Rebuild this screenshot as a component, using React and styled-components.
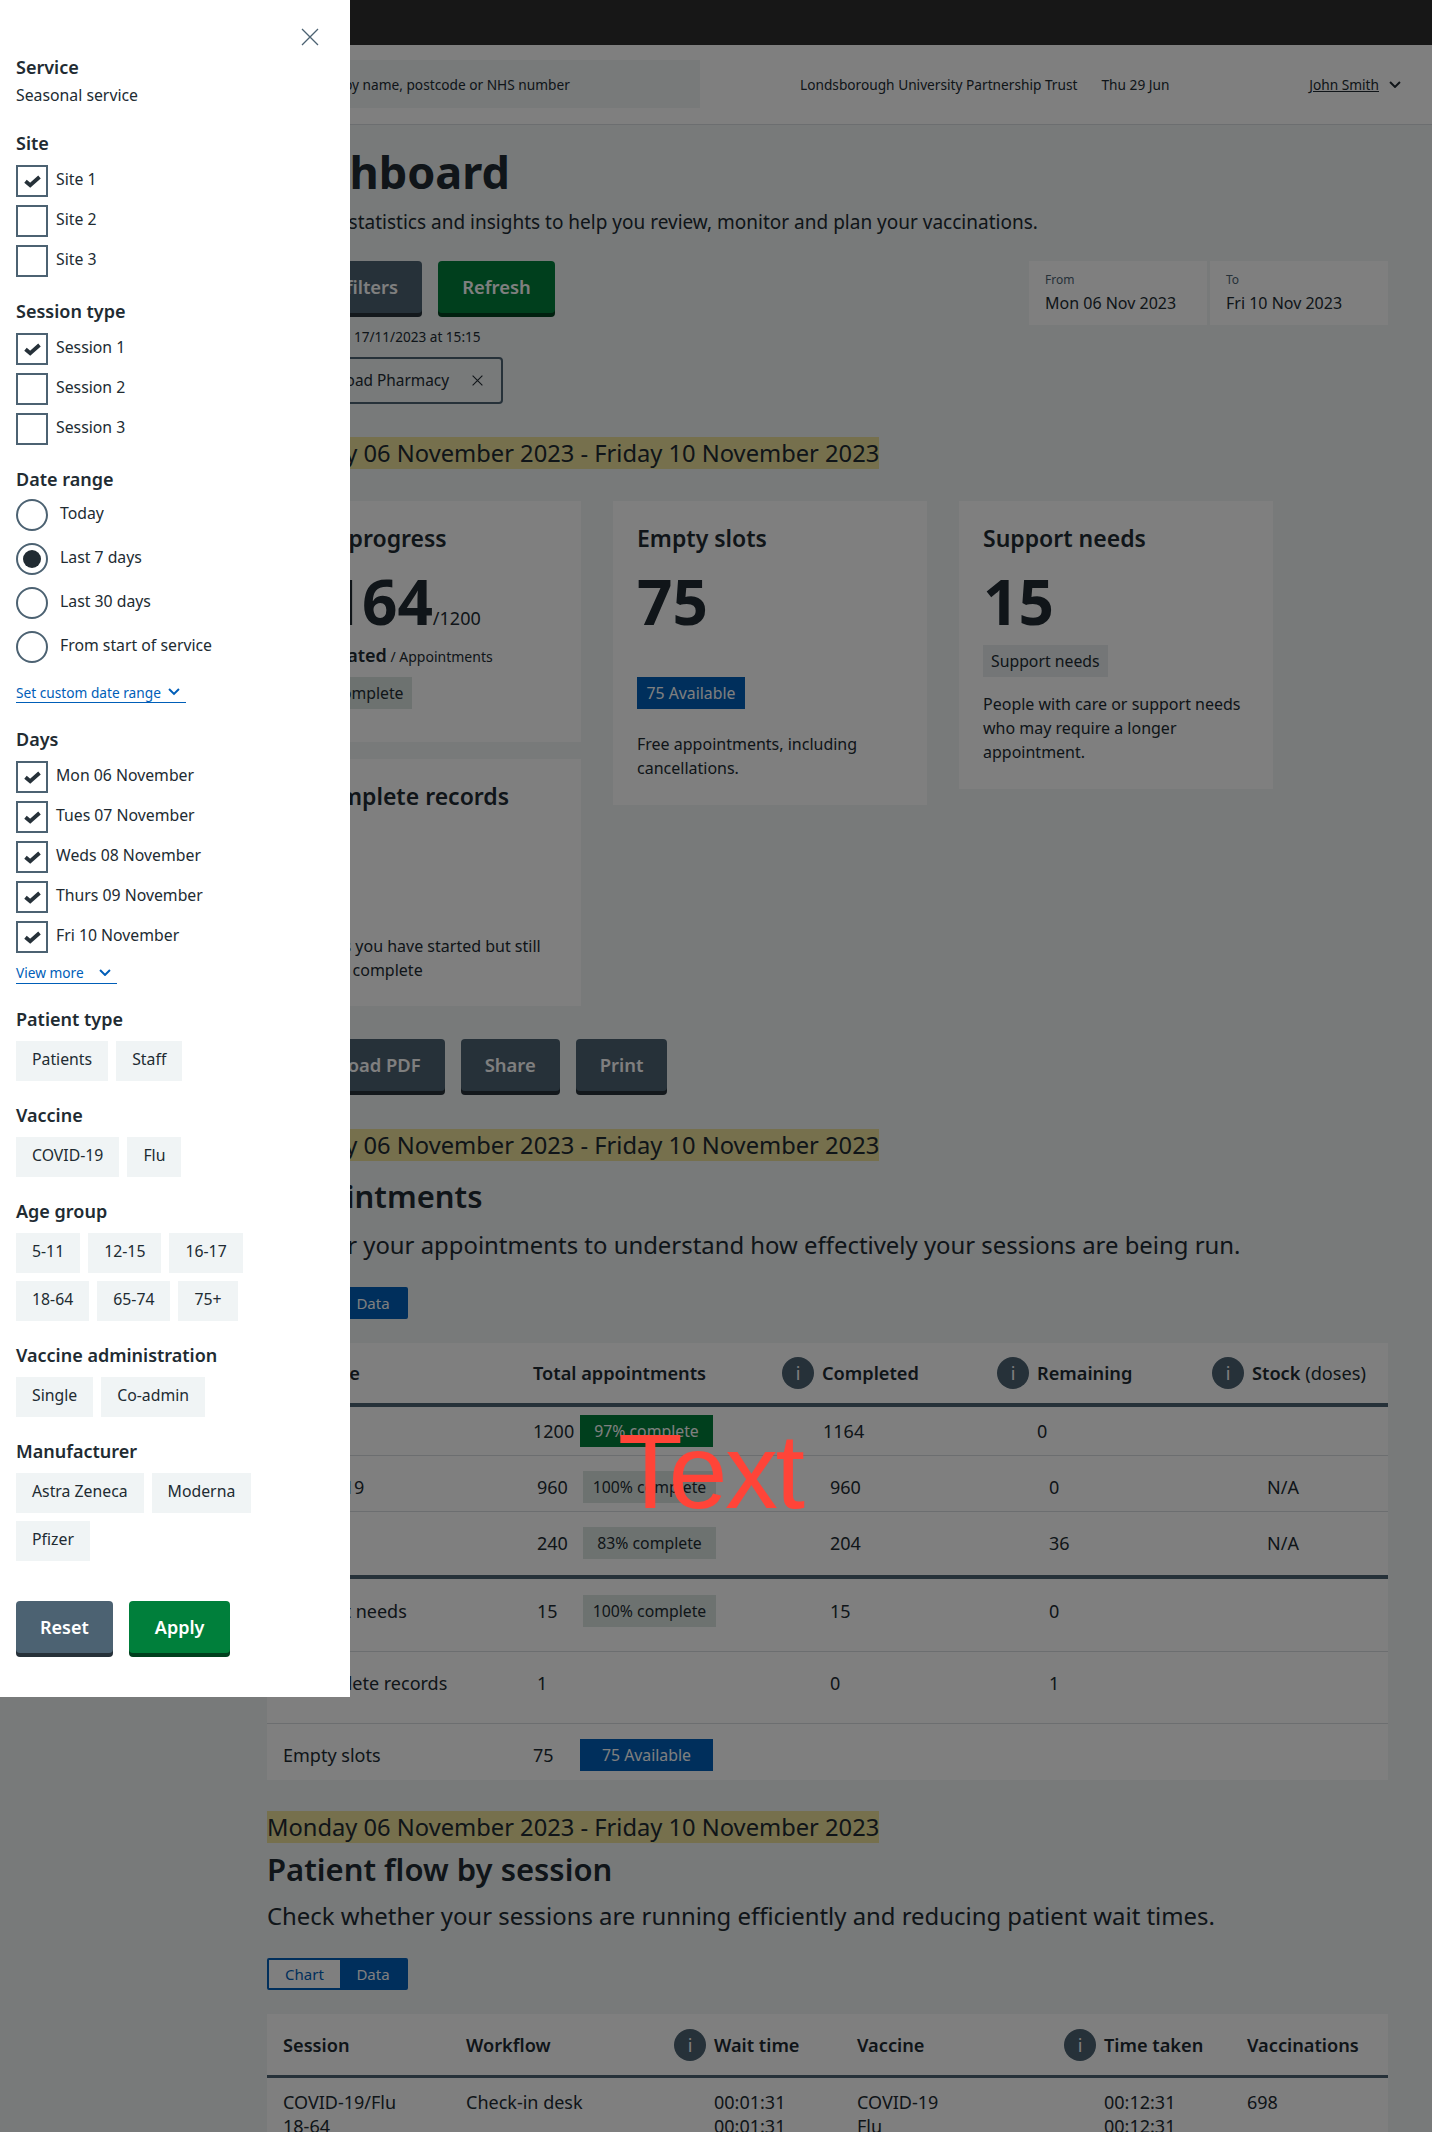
import React from "react";
import styled, { createGlobalStyle } from "styled-components";

const Global = createGlobalStyle`
  html, body { margin: 0; padding: 0; height: 2132px; overflow: hidden; background: #f0f4f5; }
  body { font-family: "Noto Sans", "Open Sans", sans-serif; color: #212b32; font-size: 16px; }
  * { box-sizing: border-box; }
`;

const Frame = styled.div`position: relative; width: 1432px; height: 2132px; overflow: hidden;`;
const TopBar = styled.div`height: 45px; background: #2e2e2e;`;
const Header = styled.header`
  height: 80px; background: #fff; border-bottom: 1px solid #d8dde0;
  display: flex; align-items: center; padding: 0 31px 0 283px; font-size: 13.7px;
`;
const Search = styled.div`
  width: 417px; height: 48px; margin-top: -1px; background: #f0f4f5; display: flex; align-items: center; padding-left: 14px;
`;
const Trust = styled.span`margin-left: 100px;`;
const HeaderDate = styled.span`margin-left: 24px;`;
const User = styled.span`margin-left: auto; display: flex; align-items: center; gap: 10px;`;
const UserName = styled.span`text-decoration: underline;`;

const Main = styled.main`padding: 19px 44px 0 267px;`;
const H1 = styled.h1`margin: 0; font-size: 45px; line-height: 56px; font-weight: 700;`;
const Lead = styled.p`margin: 8px 0 0; font-size: 19px; line-height: 28px;`;
const Toolbar = styled.div`display: flex; justify-content: space-between; align-items: flex-start; margin-top: 25px;`;
const ButtonRow = styled.div`display: flex; gap: ${p => p.$gap || 16}px; margin-top: ${p => p.$top || 0}px;`;
const Button = styled.button`
  height: 52px; margin-bottom: 4px; padding: 0 ${p => p.$pad || 24}px; border: 0; border-radius: 4px;
  font: 600 ${p => p.$size || 18.4}px/1 "Noto Sans", sans-serif; color: #fff;
  background: ${p => p.$green ? "#007f3b" : "#4c6272"};
  box-shadow: 0 4px 0 ${p => p.$green ? "#00401e" : "#263139"};
`;
const Updated = styled.div`font-size: 13.6px; line-height: 20px; margin-top: 10px;`;
const Tagged = styled.div`
  display: inline-flex; align-items: center; gap: 23px; height: 47px; margin-top: 10px; padding: 0 18px 0 12px;
  border: 2px solid #4c6272; border-radius: 4px; font-size: 15.4px;
`;
const DateBoxes = styled.div`display: flex; gap: 3px;`;
const DateBox = styled.div`width: 178px; height: 64px; background: #fff; padding: 12px 16px;`;
const DateLabel = styled.div`font-size: 12px; line-height: 14px; color: #4c6272;`;
const DateValue = styled.div`font-size: 16px; line-height: 22px; margin-top: 5px;`;
const Highlight = styled.div`margin-top: ${p => p.$top}px; height: 32px;`;
const Mark = styled.span`
  display: inline-block; height: 32px; white-space: nowrap; background: #ece09a; font-size: 23.7px; line-height: 32px;
`;
const Cards = styled.div`display: grid; grid-template-columns: repeat(3, 314px); column-gap: 32px; width: 1006px; margin-top: 32px; align-items: start;`;
const Stack = styled.div`display: flex; flex-direction: column; gap: 17px;`;
const Card = styled.section`background: #fff; padding: 23px 24px ${p => p.$bottom || 24}px;`;
const CardTitle = styled.h3`margin: 0; font-size: 23px; line-height: 28px; font-weight: 600;`;
const BigNumber = styled.div`margin-top: 13px; font-size: 62px; line-height: 72px; height: 72px; font-weight: 700;`;
const OutOf = styled.span`font-size: 18px; line-height: 1; font-weight: 400;`;
const Meta = styled.div`margin-top: 8px; line-height: 24px; font-size: 14px; height: 24px;`;
const MetaStrong = styled.strong`font-size: 18px; line-height: 1; font-weight: 600;`;
const Tag = styled.span`
  display: flex; align-items: center; justify-content: center; height: 32px; padding: 0 ${p => p.$pad || 8}px;
  white-space: nowrap; font-size: 15.8px; width: ${p => p.$w ? p.$w + "px" : "fit-content"};
  margin-top: ${p => p.$top || 0}px;
  background: ${p => ({ green: "#007f3b", blue: "#005eb8", mint: "#dbe5e0", grey: "#e8edee" }[p.$kind])};
  color: ${p => (p.$kind === "green" || p.$kind === "blue") ? "#fff" : "#212b32"};
`;
const CardText = styled.p`margin: ${p => p.$top}px 0 0; font-size: 16px; line-height: 24px;`;
const H2 = styled.h2`margin: ${p => p.$top}px 0 0; font-size: 31px; line-height: 40px; font-weight: 600;`;
const Sub = styled.p`margin: ${p => p.$top}px 0 0; font-size: 23.9px; line-height: 32px; white-space: nowrap;`;
const Toggle = styled.div`
  display: flex; width: 141px; height: 32px; margin-top: ${p => p.$top}px; border: 2px solid #005eb8; border-radius: 2px; background: #005eb8; font-size: 15px;
`;
const ToggleItem = styled.span`
  flex: ${p => p.$on ? "0 0 71px" : "1"}; display: flex; align-items: center; justify-content: center;
  background: ${p => p.$on ? "#fff" : "#005eb8"}; color: ${p => p.$on ? "#005eb8" : "#fff"};
`;
const Table = styled.div`margin-top: ${p => p.$top}px; background: #fff; font-size: 18px;`;
const THead = styled.div`
  display: grid; grid-template-columns: ${p => p.$cols}; height: ${p => p.$h}px; align-items: center; padding-left: 16px;
  border-bottom: ${p => p.$line}px solid #4c6272; font-weight: 600; font-size: 18.2px;
`;
const HeadCell = styled.div`display: flex; align-items: center; gap: 8px; white-space: nowrap;`;
const Light = styled.span`font-weight: 400;`;
const Info = styled.span`
  flex: 0 0 32px; width: 32px; height: 32px; border-radius: 50%; background: #4c6272; color: #fff;
  display: flex; align-items: center; justify-content: center; font-size: 18px; font-weight: 400;
`;
const TRow = styled.div`
  display: grid; grid-template-columns: ${p => p.$cols}; height: ${p => p.$h}px; padding: ${p => p.$pt}px 0 0 16px;
  border-bottom: ${p => p.$line ?? 1}px solid ${p => p.$line === 4 ? "#4c6272" : "#d8dde0"}; align-items: start;
`;
const TCell = styled.div`line-height: 32px; white-space: nowrap;`;
const FlowRow = styled.div`
  display: grid; grid-template-columns: 183px 248px 143px 247px 143px 1fr; padding: 12px 0 0 16px; line-height: 24px;
`;
const FlowCell = styled.div`white-space: pre-line;`;

const Overlay = styled.div`position: absolute; inset: 0; background: rgba(0,0,0,.5);`;
const RedText = styled.div`
  position: absolute; left: 618px; top: 1411px; font: 400 106px/120px "Liberation Sans", sans-serif; letter-spacing: -2.5px; color: #ff4438;
`;
const Panel = styled.aside`
  position: absolute; left: 0; top: 0; width: 350px; background: #fff; padding: 28px 16px 40px; font-size: 15.8px;
`;
const Close = styled.button`display: block; width: 18px; height: 18px; margin: 0 15px 9px auto; padding: 0; border: 0; background: none; color: #4c6272;`;
const Group = styled.div`margin-top: ${p => p.$top ?? 22}px;`;
const GroupTitle = styled.div`font-size: 18px; line-height: 24px; font-weight: 600; margin-bottom: ${p => p.$gap ?? 10}px;`;
const Plain = styled.div`line-height: 20px; margin-top: 6px;`;
const Options = styled.div`display: flex; flex-direction: column; gap: ${p => p.$gap}px;`;
const Option = styled.label`display: flex; align-items: center; gap: ${p => p.$gap}px; height: 32px;`;
const OptionText = styled.span`margin-top: -4px;`;
const Box = styled.span`
  flex: 0 0 32px; width: 32px; height: 32px; border: 2px solid #4c6272; display: flex; align-items: center; justify-content: center;
`;
const Radio = styled.span`
  flex: 0 0 32px; width: 32px; height: 32px; border: 2px solid #4c6272; border-radius: 50%; display: flex; align-items: center; justify-content: center;
  &::after { content: ""; width: 18px; height: 18px; border-radius: 50%; background: ${p => p.$on ? "#212b32" : "transparent"}; }
`;
const More = styled.a`
  display: inline-flex; align-items: center; gap: ${p => p.$gap}px; margin-top: ${p => p.$top}px; height: 20px; padding-right: 6px;
  color: #005eb8; font-size: 13.7px; border-bottom: 1.5px solid #005eb8; box-sizing: content-box;
`;
const Chips = styled.div`display: flex; flex-wrap: wrap; gap: 8px; width: 300px;`;
const Chip = styled.span`height: 40px; padding: 8px 16px 0; background: #f0f4f5; line-height: 20px;`;
const PanelActions = styled.div`display: flex; gap: 16px; margin-top: 40px;`;

const Check = () => (
  <svg width="17" height="13" viewBox="0 0 17 13" aria-hidden="true">
    <path d="M1.5 6.2 L6.2 10.2 L15.5 2" fill="none" stroke="#263139" strokeWidth="3.8" />
  </svg>
);
const Chevron = ({ size = 12, color = "#005eb8", w = 2 }) => (
  <svg width={size} height={size * 0.62} viewBox="0 0 12 7.5" aria-hidden="true">
    <path d="M1 1 L6 6 L11 1" fill="none" stroke={color} strokeWidth={w} />
  </svg>
);
const Cross = ({ size = 18, w = 1.3, color = "#4c6272" }) => (
  <svg width={size} height={size} viewBox="0 0 18 18" aria-hidden="true">
    <path d="M1 1 L17 17 M17 1 L1 17" stroke={color} strokeWidth={w} fill="none" />
  </svg>
);

const CheckGroup = ({ title, items, checked, top }) => (
  <Group $top={top}>
    <GroupTitle>{title}</GroupTitle>
    <Options $gap={8}>
      {items.map((t, i) => (
        <Option key={t} $gap={8}>
          <Box>{checked(i) && <Check />}</Box>
          <OptionText>{t}</OptionText>
        </Option>
      ))}
    </Options>
  </Group>
);
const ChipGroup = ({ title, items, top }) => (
  <Group $top={top}>
    <GroupTitle>{title}</GroupTitle>
    <Chips>{items.map(t => <Chip key={t}>{t}</Chip>)}</Chips>
  </Group>
);

const C1 = "250px 47px 243px 214px 1fr";
const C2 = "254px 46px 247px 219px 218px 1fr";
const rows = [
  { c: C1, h: 49, pt: 8, cells: ["Total", "1200", <Tag $kind="green" $w={133}>97% complete</Tag>, "1164", "0"] },
  { c: C2, h: 56, pt: 15, cells: ["COVID-19", "960", <Tag $kind="mint" $w={133}>100% complete</Tag>, "960", "0", "N/A"] },
  { c: C2, h: 67, pt: 15, line: 4, cells: ["Flu", "240", <Tag $kind="mint" $w={133}>83% complete</Tag>, "204", "36", "N/A"] },
  { c: C2, h: 73, pt: 16, cells: ["Support needs", "15", <Tag $kind="mint" $w={133}>100% complete</Tag>, "15", "0"] },
  { c: C2, h: 72, pt: 15, cells: ["Incomplete records", "1", "", "0", "1"] },
  { c: C1, h: 56, pt: 15, line: 0, cells: ["Empty slots", "75", <Tag $kind="blue" $w={133}>75 Available</Tag>] },
];
const Range = "Monday 06 November 2023 - Friday 10 November 2023";

export default function App() {
  return (
    <Frame>
      <Global />
      <TopBar />
      <Header>
        <Search>Search by name, postcode or NHS number</Search>
        <Trust>Londsborough University Partnership Trust</Trust>
        <HeaderDate>Thu 29 Jun</HeaderDate>
        <User><UserName>John Smith</UserName><Chevron color="#212b32" /></User>
      </Header>
      <Main>
        <H1>Dashboard</H1>
        <Lead>View key statistics and insights to help you review, monitor and plan your vaccinations.</Lead>
        <Toolbar>
          <div>
            <ButtonRow>
              <Button>Reset filters</Button>
              <Button $green>Refresh</Button>
            </ButtonRow>
            <Updated>Last updated 17/11/2023 at 15:15</Updated>
            <Tagged>Station Road Pharmacy<Cross size={11} w={1.8} color="#212b32" /></Tagged>
          </div>
          <DateBoxes>
            <DateBox><DateLabel>From</DateLabel><DateValue>Mon 06 Nov 2023</DateValue></DateBox>
            <DateBox><DateLabel>To</DateLabel><DateValue>Fri 10 Nov 2023</DateValue></DateBox>
          </DateBoxes>
        </Toolbar>
        <Highlight $top={33}><Mark>{Range}</Mark></Highlight>
        <Cards>
          <Stack>
            <Card $bottom={33}>
              <CardTitle>Your progress</CardTitle>
              <BigNumber>1164<OutOf>/1200</OutOf></BigNumber>
              <Meta><MetaStrong>Vaccinated</MetaStrong> / Appointments</Meta>
              <Tag $kind="mint" $top={8}>97% complete</Tag>
            </Card>
            <Card>
              <CardTitle>Incomplete records</CardTitle>
              <BigNumber>1</BigNumber>
              <CardText $top={39}>Records you have started but still need to complete</CardText>
            </Card>
          </Stack>
          <Card $bottom={25}>
            <CardTitle>Empty slots</CardTitle>
            <BigNumber>75</BigNumber>
            <Meta />
            <Tag $kind="blue" $top={8} $w={108}>75 Available</Tag>
            <CardText $top={23}>Free appointments, including cancellations.</CardText>
          </Card>
          <Card $bottom={25}>
            <CardTitle>Support needs</CardTitle>
            <BigNumber>15</BigNumber>
            <Tag $kind="grey" $top={8}>Support needs</Tag>
            <CardText $top={15}>People with care or support needs who may require a longer appointment.</CardText>
          </Card>
        </Cards>
        <ButtonRow $top={33}>
          <Button>Download PDF</Button>
          <Button>Share</Button>
          <Button>Print</Button>
        </ButtonRow>
        <Highlight $top={34}><Mark>{Range}</Mark></Highlight>
        <H2 $top={15}>Appointments</H2>
        <Sub $top={13}>Monitor your appointments to understand how effectively your sessions are being run.</Sub>
        <Toggle $top={26}><ToggleItem $on>Chart</ToggleItem><ToggleItem>Data</ToggleItem></Toggle>
        <Table $top={24}>
          <THead $cols="250px 249px 215px 215px 1fr" $h={64} $line={4}>
            <HeadCell>Measure</HeadCell>
            <HeadCell>Total appointments</HeadCell>
            <HeadCell><Info>i</Info>Completed</HeadCell>
            <HeadCell><Info>i</Info>Remaining</HeadCell>
            <HeadCell><Info>i</Info><span>Stock <Light>(doses)</Light></span></HeadCell>
          </THead>
          {rows.map((r, i) => (
            <TRow key={i} $cols={r.c} $h={r.h} $pt={r.pt} $line={r.line}>
              {r.cells.map((c, j) => <TCell key={j}>{c}</TCell>)}
            </TRow>
          ))}
        </Table>
        <Highlight $top={31}><Mark>{Range}</Mark></Highlight>
        <H2 $top={6}>Patient flow by session</H2>
        <Sub $top={11}>Check whether your sessions are running efficiently and reducing patient wait times.</Sub>
        <Toggle $top={26}><ToggleItem $on>Chart</ToggleItem><ToggleItem>Data</ToggleItem></Toggle>
        <Table $top={24}>
          <THead $cols="183px 208px 183px 207px 183px 1fr" $h={64} $line={3}>
            <HeadCell>Session</HeadCell>
            <HeadCell>Workflow</HeadCell>
            <HeadCell><Info>i</Info>Wait time</HeadCell>
            <HeadCell>Vaccine</HeadCell>
            <HeadCell><Info>i</Info>Time taken</HeadCell>
            <HeadCell>Vaccinations</HeadCell>
          </THead>
          <FlowRow>
            <FlowCell>{"COVID-19/Flu\n18-64"}</FlowCell>
            <FlowCell>Check-in desk</FlowCell>
            <FlowCell>{"00:01:31\n00:01:31"}</FlowCell>
            <FlowCell>{"COVID-19\nFlu"}</FlowCell>
            <FlowCell>{"00:12:31\n00:12:31"}</FlowCell>
            <FlowCell>698</FlowCell>
          </FlowRow>
        </Table>
      </Main>
      <Overlay />
      <RedText>Text</RedText>
      <Panel>
        <Close><Cross /></Close>
        <Group $top={0}>
          <GroupTitle $gap={0}>Service</GroupTitle>
          <Plain>Seasonal service</Plain>
        </Group>
        <CheckGroup top={26} title="Site" items={["Site 1", "Site 2", "Site 3"]} checked={i => i === 0} />
        <CheckGroup title="Session type" items={["Session 1", "Session 2", "Session 3"]} checked={i => i === 0} />
        <Group>
          <GroupTitle $gap={8}>Date range</GroupTitle>
          <Options $gap={12}>
            {["Today", "Last 7 days", "Last 30 days", "From start of service"].map((t, i) => (
              <Option key={t} $gap={12}><Radio $on={i === 1} /><OptionText>{t}</OptionText></Option>
            ))}
          </Options>
          <More $gap={7} $top={19}>Set custom date range <Chevron /></More>
        </Group>
        <CheckGroup top={24} title="Days" items={["Mon 06 November", "Tues 07 November", "Weds 08 November", "Thurs 09 November", "Fri 10 November"]} checked={() => true} />
        <Group $top={8}>
          <More $gap={15} $top={0}>View more <Chevron /></More>
        </Group>
        <ChipGroup top={23} title="Patient type" items={["Patients", "Staff"]} />
        <ChipGroup title="Vaccine" items={["COVID-19", "Flu"]} />
        <ChipGroup title="Age group" items={["5-11", "12-15", "16-17", "18-64", "65-74", "75+"]} />
        <ChipGroup title="Vaccine administration" items={["Single", "Co-admin"]} />
        <ChipGroup title="Manufacturer" items={["Astra Zeneca", "Moderna", "Pfizer"]} />
        <PanelActions>
          <Button $size={18}>Reset</Button>
          <Button $size={18} $pad={26} $green>Apply</Button>
        </PanelActions>
      </Panel>
    </Frame>
  );
}
